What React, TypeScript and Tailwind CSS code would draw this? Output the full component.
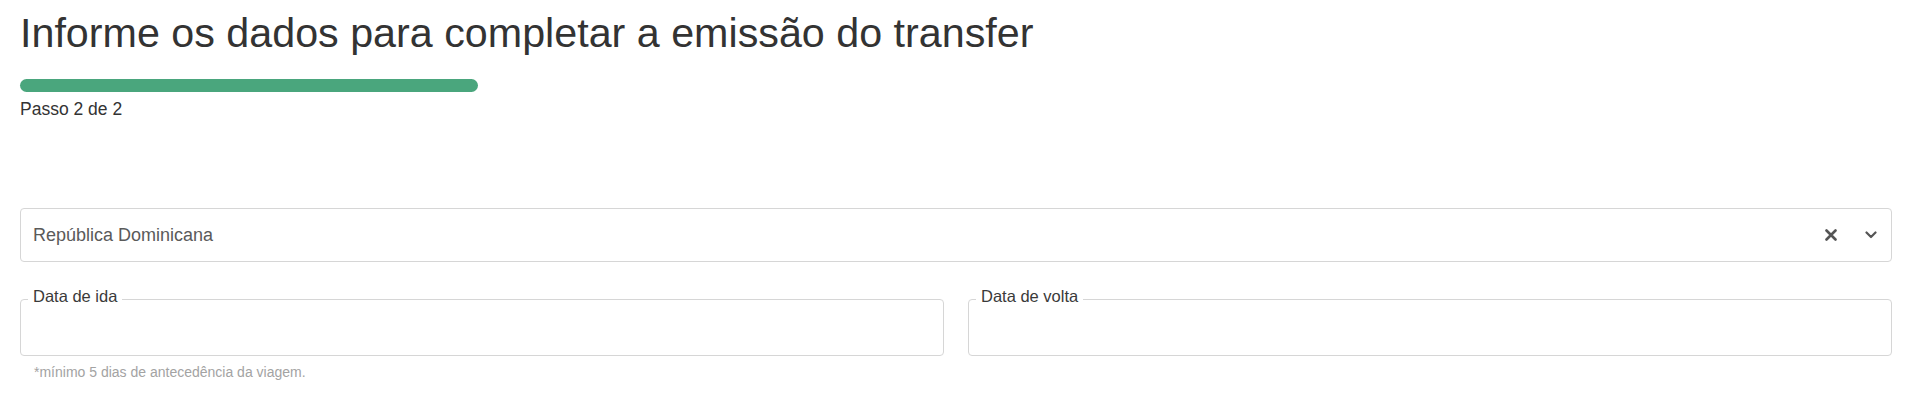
import { useState } from "react";

function ClearIcon() {
  return (
    <svg width="12" height="12" viewBox="0 0 12 12" className="text-[#555]">
      <path d="M1.5 1.5 L10.5 10.5 M10.5 1.5 L1.5 10.5" stroke="currentColor" strokeWidth="2.6" strokeLinecap="round" />
    </svg>
  );
}

function ChevronIcon() {
  return (
    <svg width="12" height="8" viewBox="0 0 12 8" className="text-[#555]">
      <path d="M1.5 1.5 L6 6 L10.5 1.5" stroke="currentColor" strokeWidth="2.2" fill="none" strokeLinecap="round" strokeLinejoin="round" />
    </svg>
  );
}

function DateField({ label }: { label: string }) {
  return (
    <fieldset className="m-0 min-w-0 rounded-[4px] border border-[#d6d6d6] px-[7px] pt-0 pb-0">
      <legend className="px-[5px] pb-[6px] text-[16.5px] leading-[20px] text-[#3a3a3a]">{label}</legend>
      <input type="text" className="block h-[43px] w-full bg-transparent px-[6px] text-[16px] outline-none" />
    </fieldset>
  );
}

export default function App() {
  const [country, setCountry] = useState("República Dominicana");

  return (
    <div className="min-h-[406px] bg-white pl-[20px] pr-[28px] font-['Liberation_Sans',Arial,sans-serif]">
      {/* Header */}
      <h1 className="pt-[9px] text-[41.25px] font-normal leading-[49px] text-[#333]">
        Informe os dados para completar a emissão do transfer
      </h1>

      {/* Progress */}
      <div className="mt-[21px] h-[13px] w-[458px] rounded-full bg-[#4aa67d]" />
      <p className="mt-[5px] text-[17.5px] leading-[24px] text-[#333]">Passo 2 de 2</p>

      {/* Country select */}
      <div className="mt-[87px] flex h-[54px] items-center rounded-[4px] border border-[#d6d6d6] pl-[12px] pr-[10px]">
        <span className="flex-1 text-[18px] leading-[20px] text-[#5a5a5a]">{country}</span>
        <button onClick={() => setCountry("")} className="flex h-[20px] w-[20px] items-center justify-center" aria-label="Limpar">
          <ClearIcon />
        </button>
        <span className="ml-[20px] flex h-[20px] w-[20px] items-center justify-center">
          <ChevronIcon />
        </span>
      </div>

      {/* Dates */}
      <div className="mt-[24px] grid grid-cols-2 gap-6">
        <DateField label="Data de ida" />
        <DateField label="Data de volta" />
      </div>
      <p className="mt-[6px] pl-[14px] text-[14px] leading-[20px] text-[#a3a3a3]">
        *mínimo 5 dias de antecedência da viagem.
      </p>
    </div>
  );
}
